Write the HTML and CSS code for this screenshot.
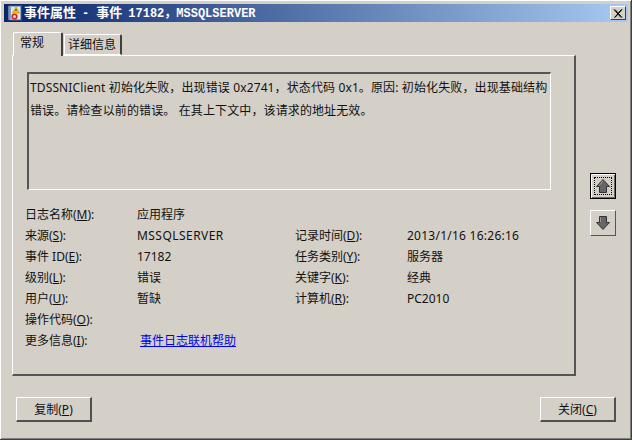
FILE: index.html
```html
<!DOCTYPE html>
<html lang="zh-CN">
<head>
<meta charset="utf-8">
<title>事件属性</title>
<link rel="stylesheet" href="styles.css">
</head>
<body>
<div class="window">
  <div class="titlebar">
    <svg class="app-icon" width="16" height="16" viewBox="0 0 16 16">
      <rect x="2.5" y="0.5" width="12" height="15" fill="#4f6f9f" stroke="#2b4672"/>
      <rect x="4" y="1.5" width="9.5" height="13" fill="#dfe5ee"/>
      <path d="M1 2h3M1 4h3M1 6h3M1 8h3M1 10h3M1 12h3M1 14h3" stroke="#c8d0dc"/>
      <path d="M9 2l3.5 6h-7z" fill="#f5c800" stroke="#a08000" stroke-width="0.5"/>
      <path d="M9 4v2" stroke="#222"/>
      <circle cx="7.5" cy="11.5" r="2.3" fill="#e8e0e0" stroke="#c8262a" stroke-width="1.6"/>
    </svg>
    <span class="title-text">事件属性 <span class="title-mono">- </span>事件 <span class="title-mono">17182，MSSQLSERVER</span></span>
    <button class="close" aria-label="关闭">
      <svg width="10" height="9" viewBox="0 0 10 9"><path d="M1 0.5l7 8M8.5 0.5l-7 8M2 0.5l7 8M9 0.5l-7 8" stroke="#000" fill="none"/></svg>
    </button>
  </div>
  <div class="main">
    <div class="content">
      <div class="tabs">
        <div class="tab active">常规</div>
        <div class="tab">详细信息</div>
      </div>
      <div class="panel">
        <div class="message">TDSSNIClient 初始化失败，出现错误 0x2741，状态代码 0x1。原因: 初始化失败，出现基础结构错误。请检查以前的错误。 在其上下文中，该请求的地址无效。</div>
        <div class="info">
          <div>日志名称(<u>M</u>):</div><div>应用程序</div><div></div><div></div>
          <div>来源(<u>S</u>):</div><div class="wide">MSSQLSERVER</div><div>记录时间(<u>D</u>):</div><div class="wider">2013/1/16 16:26:16</div>
          <div>事件 ID(<u>E</u>):</div><div>17182</div><div>任务类别(<u>Y</u>):</div><div>服务器</div>
          <div>级别(<u>L</u>):</div><div>错误</div><div>关键字(<u>K</u>):</div><div>经典</div>
          <div>用户(<u>U</u>):</div><div>暂缺</div><div>计算机(<u>R</u>):</div><div>PC2010</div>
          <div>操作代码(<u>O</u>):</div><div></div><div></div><div></div>
          <div>更多信息(<u>I</u>):</div><div><a class="help" href="#">事件日志联机帮助</a></div><div></div><div></div>
        </div>
      </div>
    </div>
    <div class="side">
      <button class="arrow focused" aria-label="上一个">
        <svg width="14" height="14" viewBox="0 0 14 14"><path d="M7 0.5L13.5 7.5H10.5V13.5H3.5V7.5H0.5z" fill="#666" stroke="#333"/><path d="M7 2L3 6.5" stroke="#999"/></svg>
      </button>
      <button class="arrow" aria-label="下一个">
        <svg width="14" height="14" viewBox="0 0 14 14"><path d="M7 13.5L13.5 6.5H10.5V0.5H3.5V6.5H0.5z" fill="#666" stroke="#333"/><path d="M4.5 1.5V6" stroke="#999"/></svg>
      </button>
    </div>
  </div>
  <div class="footer">
    <button class="btn">复制(<u>P</u>)</button>
    <button class="btn">关闭(<u>C</u>)</button>
  </div>
</div>
</body>
</html>
```
FILE: styles.css
```css
* { box-sizing: border-box; }
html, body { margin: 0; padding: 0; }
body {
  width: 632px;
  height: 440px;
  overflow: hidden;
  background: #d4d0c8;
  font-family: "Noto Sans", "Noto Sans CJK SC", sans-serif;
  font-size: 12px;
  color: #111;
}
.window {
  width: 632px;
  height: 440px;
  padding: 4px 3px 0 4px;
  border-right: 1px solid #404040;
  border-bottom: 1px solid #404040;
  box-shadow: inset 1px 1px 0 #fff, inset -1px -1px 0 #808080;
  display: flex;
  flex-direction: column;
}
.titlebar {
  height: 18px;
  flex: none;
  display: flex;
  align-items: center;
  padding: 0 2px 0 3px;
  color: #fff;
  background: linear-gradient(90deg, #0a246a 0%, #a6caf0 100%);
}
.app-icon { flex: none; margin-right: 1px; }
.title-text {
  flex: 1;
  font-family: "Noto Sans CJK SC", sans-serif;
  font-weight: 700;
  font-size: 13px;
  white-space: pre;
  line-height: 18px;
  word-spacing: 3px;
}
.title-mono {
  font-family: "Liberation Mono", "Noto Sans CJK SC", monospace;
  font-size: 12px;
  word-spacing: 0;
}
.close {
  width: 16px;
  height: 14px;
  padding: 0;
  display: flex;
  align-items: center;
  justify-content: center;
  background: #d4d0c8;
  border: 1px solid;
  border-color: #fff #404040 #404040 #fff;
}
.main {
  flex: none;
  height: 344px;
  margin: 10px 0 0 8px;
  display: flex;
}
.content { width: 564px; flex: none; display: flex; flex-direction: column; }
.tabs { height: 23px; display: flex; align-items: flex-end; padding-left: 1px; position: relative; z-index: 1; }
.tab {
  width: 58px;
  height: 21px;
  margin-left: 1px;
  text-align: center;
  line-height: 20px;
  padding-right: 1px;
  border: 1px solid;
  border-color: #fff #404040 #fff #fff;
  border-right-width: 2px;
  border-radius: 2px 2px 0 0;
}
.tab.active {
  width: 50px;
  height: 24px;
  margin: 0 0 -1px 0;
  border-bottom: 0;
  line-height: 20px;
  background: #d4d0c8;
  padding-right: 11px;
}
.panel {
  height: 321px;
  padding: 16px 24px 0 14px;
  border: 1px solid;
  border-color: #fff;
  border-right: 2px solid #555;
  border-bottom: 2px solid #555;
}
.message {
  height: 118px;
  width: 524px;
  padding: 2px 1px;
  line-height: 23px;
  letter-spacing: 0.12px;
  border-top: 2px solid #555;
  border-left: 2px solid #555;
  border-right: 1px solid #fff;
  border-bottom: 1px solid #fff;
}
.info {
  margin: 14px 0 0 -2px;
  display: grid;
  grid-template-columns: 112px 158px 112px 1fr;
  grid-auto-rows: 21px;
  line-height: 21px;
}
.wide { letter-spacing: 0.45px; }
.wider { letter-spacing: 0.25px; }
.help { margin-left: 3px; color: #0000ee; }
.side {
  margin-left: 14px;
  padding-top: 141px;
  display: flex;
  flex-direction: column;
  gap: 11px;
}
.arrow {
  width: 26px;
  height: 26px;
  padding: 0;
  display: flex;
  align-items: center;
  justify-content: center;
  background: #d4d0c8;
  border: 1px solid;
  border-color: #fff #555 #555 #fff;
}
.arrow.focused {
  border: 1px solid #000;
  outline: 1px dotted #000;
  outline-offset: -5px;
  box-shadow: inset 1px 1px 0 #fff, inset -1px -1px 0 #666;
}
.footer {
  margin-top: 21px;
  padding: 0 12px;
  display: flex;
  justify-content: space-between;
}
.btn {
  width: 76px;
  height: 25px;
  padding: 0;
  font: inherit;
  color: inherit;
  background: #d4d0c8;
  border: 1px solid;
  border-color: #fff #505050 #505050 #fff;
  border-right-width: 2px;
  border-bottom-width: 2px;
}
```
